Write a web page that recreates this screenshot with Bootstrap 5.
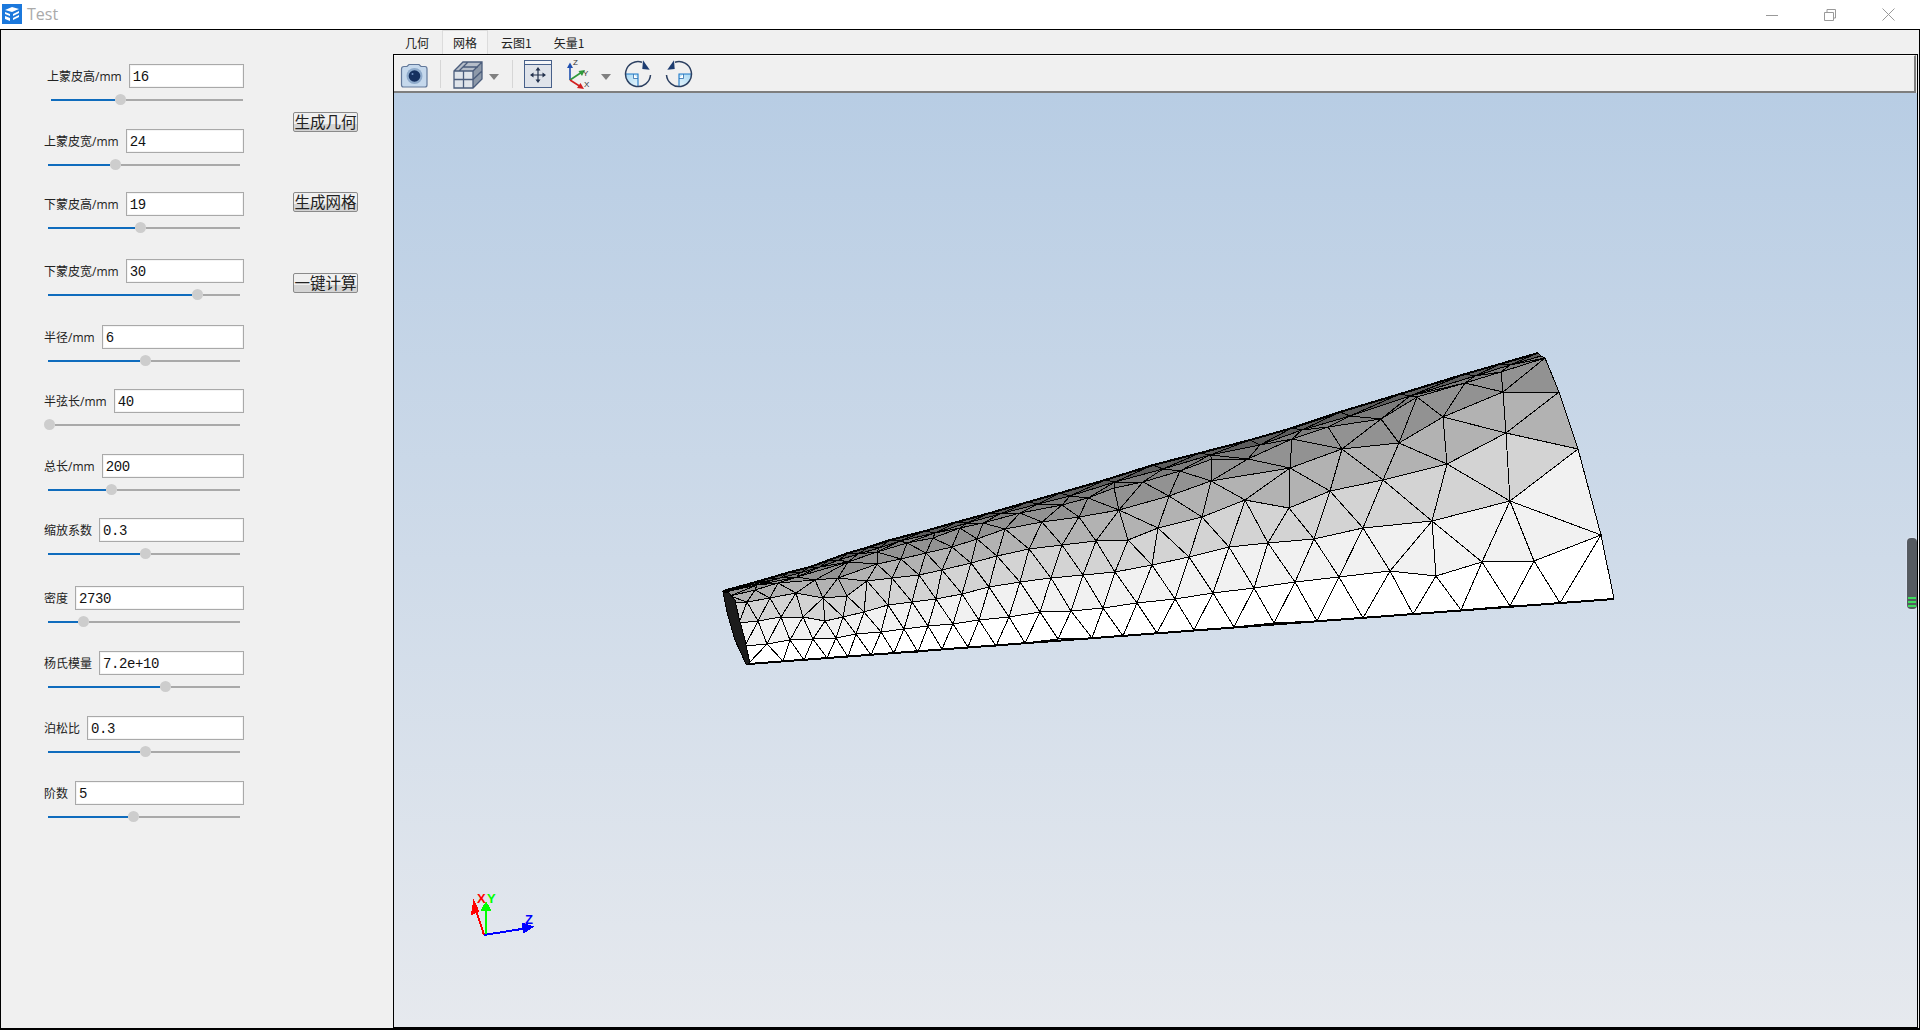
<!DOCTYPE html>
<html lang="zh">
<head>
  <meta charset="UTF-8">
  <title>Test</title>
  <meta name="viewport" content="width=device-width, initial-scale=1">
  <link href="https://cdn.jsdelivr.net/npm/bootstrap@5.3.3/dist/css/bootstrap.min.css" rel="stylesheet">
  <style>
    html, body { height: 1031px; overflow: hidden; background: #fff; }
    body { font-family: "Open Sans", "Noto Sans CJK SC", sans-serif; font-size: 12px; color: #222; }

    .title-bar { height: 29px; background: #fff; }
    .app-icon { margin: 4px 5px 0 2px; }
    .title-text { font-size: 16px; color: #aaa; line-height: 29px; }
    .win-group { margin-right: 3px; }
    .win-btn { width: 58px; height: 29px; }

    .main-area { height: 1001px; border: 1px solid #000; border-width: 1px 1px 2px 1px; background: #f0f0f0; }
    .side-panel { width: 392px; flex: none; }
    .param-col { width: 200px; margin-left: 43px; padding-top: 34px; }
    .param-block { margin-bottom: 24px; }
    .param-block:first-child { margin-left: 3px; }
    .param-block:nth-child(2) { margin-bottom: 22px; }
    .param-block:nth-child(3) { margin-bottom: 26px; }
    .param-block:nth-child(4) { margin-bottom: 25px; }
    .param-block:nth-child(5) { margin-bottom: 23px; }
    .param-block:nth-child(7) { margin-bottom: 23px; }
    .param-block:nth-child(8) { margin-bottom: 27px; }
    .param-head { column-gap: 7px; height: 24px; }
    .param-label { white-space: nowrap; line-height: 24px; padding-top: 1px; }
    .param-input { flex: 1; min-width: 0; height: 24px; border: 1px solid #a9a9a9; box-shadow: inset 0 0 0 1px #f4f4f4; background: #fff; padding: 2px 3px 0; font-family: "Liberation Mono", monospace; font-size: 14px; letter-spacing: -0.4px; color: #111; outline: 0; }

    .range-line { width: 192px; height: 11px; margin: 6px 0 0 4px; }
    .range-fill { height: 2px; background: #0f6cbd; flex: none; }
    .range-knob { width: 11px; height: 11px; border-radius: 50%; background: #cdcdcd; flex: none; }
    .knob-start { margin-left: -4px; }
    .range-rest { height: 2px; background: #a9a9a9; flex: 1; }

    .action-col { margin-left: 49px; padding-top: 82px; row-gap: 60px; }
    .calc-btn { width: 65px; height: 20px; padding: 0 0 2px; border: 1px solid #8a8a8a; border-radius: 2px; font-family: "Noto Sans CJK SC", sans-serif; font-size: 15.5px; line-height: 16px; color: #222; background: linear-gradient(#f0f0f0 60%, #d4d4d4 60%); white-space: nowrap; }
    .calc-btn:last-child { margin-top: 1px; }

    .work-col { flex: 1; min-width: 0; }
    .tab-strip { height: 24px; font-family: "Noto Sans CJK SC", sans-serif; }
    .tab-strip .nav-link { height: 24px; padding: 6px 11px 0; line-height: 14px; font-size: 12px; color: #222; }
    .tab-strip .tab-one { padding: 6px 13px 0 12px; }
    .tab-strip .tab-on { padding: 5px 10px 0; background: #f4f4f4; border: 1px solid #dcdcdc; border-width: 1px 1px 0 1px; }
    .tab-strip .tab-next { margin-left: 2px; }
    .tab-frame { height: 974px; margin-right: 1px; border: 1px solid #000; border-width: 1px 1px 1px 1px; }

    .tool-row { height: 38px; background: #f0f0f0; border-top: 1px solid #fafafa; border-bottom: 2px solid #7e7e7e; border-right: 2px solid #7e7e7e; margin-right: 1px; padding: 4px 0 0 6px; }
    .tool-sep { width: 1px; height: 28px; background: #d6d6d6; }
    .tool-row svg { flex: none; display: block; }
    .sep-first { margin-left: 12px; }
    .cube-icon { margin-left: 12px; }
    .sep-second { margin-left: 12px; }
    .fit-icon { margin-left: 11px; }
    .axes-icon { margin-left: 16px; margin-top: -2px; overflow: visible; }
    .drop-arrow { margin-top: 8px; }
    .drop-axes { margin-left: 1px; }
    .rot-left { margin-left: 12px; }
    .rot-right { margin-left: 13px; }

    .view-pane { height: 934px; background: linear-gradient(#b8cde4, #e6e9ee); overflow: hidden; }
    .mesh-canvas { position: absolute; left: 0; top: 0; shape-rendering: crispEdges; }
    .float-bar { position: absolute; left: 1513px; top: 445px; width: 10px; height: 71px; border-radius: 4px; background: #555a60; box-shadow: 0 0 2px #eef; overflow: hidden; }
    .float-bar i { display: block; height: 2px; margin: 2px 1px 0; background: #3ddc5c; }
    .float-bar b { display: block; height: 57px; }
    .axis-text { font-family: "Liberation Sans", sans-serif; font-weight: 700; font-size: 13px; }
    .icon-text { font-family: "Liberation Sans", sans-serif; font-size: 8px; fill: #333; }
  </style>
</head>
<body>

  <div class="title-bar d-flex align-items-start">
    <svg class="app-icon" width="20" height="20" viewBox="0 0 20 20">
      <rect width="20" height="20" fill="#1b78dc"/>
      <path d="M3 6 L10 3 L17 5 L10 8 Z M3 8 L8 10 L8 12 L3 10 Z M3 12 L8 14 L8 17 L3 15 Z" fill="#fff"/>
      <path d="M11 10 L17 7 L17 9 L11 12 Z M11 14 L17 11 L17 13 L11 16 Z" fill="#fff"/>
    </svg>
    <span class="title-text">Test</span>
    <div class="win-group ms-auto d-flex">
      <div class="win-btn d-flex align-items-center justify-content-center">
        <svg width="12" height="12"><path d="M0 6.5 H12" stroke="#999"/></svg>
      </div>
      <div class="win-btn d-flex align-items-center justify-content-center">
        <svg width="12" height="12"><path d="M0.5 3.5 H9.5 V11.5 H0.5 Z M3 3 V0.5 H11.5 V9 H10" fill="none" stroke="#999"/></svg>
      </div>
      <div class="win-btn d-flex align-items-center justify-content-center">
        <svg width="13" height="13"><path d="M0.5 0.5 L12.5 12.5 M12.5 0.5 L0.5 12.5" stroke="#999"/></svg>
      </div>
    </div>
  </div>

  <div class="main-area d-flex">
    <div class="side-panel d-flex">
      <div class="param-col">
        <div class="param-block">
          <div class="param-head d-flex"><label class="param-label">上蒙皮高/mm</label><input class="param-input" value="16"></div>
          <div class="range-line d-flex align-items-center"><div class="range-fill" style="width:64px"></div><div class="range-knob"></div><div class="range-rest"></div></div>
        </div>
        <div class="param-block">
          <div class="param-head d-flex"><label class="param-label">上蒙皮宽/mm</label><input class="param-input" value="24"></div>
          <div class="range-line d-flex align-items-center"><div class="range-fill" style="width:62px"></div><div class="range-knob"></div><div class="range-rest"></div></div>
        </div>
        <div class="param-block">
          <div class="param-head d-flex"><label class="param-label">下蒙皮高/mm</label><input class="param-input" value="19"></div>
          <div class="range-line d-flex align-items-center"><div class="range-fill" style="width:87px"></div><div class="range-knob"></div><div class="range-rest"></div></div>
        </div>
        <div class="param-block">
          <div class="param-head d-flex"><label class="param-label">下蒙皮宽/mm</label><input class="param-input" value="30"></div>
          <div class="range-line d-flex align-items-center"><div class="range-fill" style="width:144px"></div><div class="range-knob"></div><div class="range-rest"></div></div>
        </div>
        <div class="param-block">
          <div class="param-head d-flex"><label class="param-label">半径/mm</label><input class="param-input" value="6"></div>
          <div class="range-line d-flex align-items-center"><div class="range-fill" style="width:92px"></div><div class="range-knob"></div><div class="range-rest"></div></div>
        </div>
        <div class="param-block">
          <div class="param-head d-flex"><label class="param-label">半弦长/mm</label><input class="param-input" value="40"></div>
          <div class="range-line d-flex align-items-center"><div class="range-knob knob-start"></div><div class="range-rest"></div></div>
        </div>
        <div class="param-block">
          <div class="param-head d-flex"><label class="param-label">总长/mm</label><input class="param-input" value="200"></div>
          <div class="range-line d-flex align-items-center"><div class="range-fill" style="width:58px"></div><div class="range-knob"></div><div class="range-rest"></div></div>
        </div>
        <div class="param-block">
          <div class="param-head d-flex"><label class="param-label">缩放系数</label><input class="param-input" value="0.3"></div>
          <div class="range-line d-flex align-items-center"><div class="range-fill" style="width:92px"></div><div class="range-knob"></div><div class="range-rest"></div></div>
        </div>
        <div class="param-block">
          <div class="param-head d-flex"><label class="param-label">密度</label><input class="param-input" value="2730"></div>
          <div class="range-line d-flex align-items-center"><div class="range-fill" style="width:30px"></div><div class="range-knob"></div><div class="range-rest"></div></div>
        </div>
        <div class="param-block">
          <div class="param-head d-flex"><label class="param-label">杨氏模量</label><input class="param-input" value="7.2e+10"></div>
          <div class="range-line d-flex align-items-center"><div class="range-fill" style="width:112px"></div><div class="range-knob"></div><div class="range-rest"></div></div>
        </div>
        <div class="param-block">
          <div class="param-head d-flex"><label class="param-label">泊松比</label><input class="param-input" value="0.3"></div>
          <div class="range-line d-flex align-items-center"><div class="range-fill" style="width:92px"></div><div class="range-knob"></div><div class="range-rest"></div></div>
        </div>
        <div class="param-block">
          <div class="param-head d-flex"><label class="param-label">阶数</label><input class="param-input" value="5"></div>
          <div class="range-line d-flex align-items-center"><div class="range-fill" style="width:80px"></div><div class="range-knob"></div><div class="range-rest"></div></div>
        </div>
      </div>
      <div class="action-col d-flex flex-column align-items-start">
        <button class="btn calc-btn">生成几何</button>
        <button class="btn calc-btn">生成网格</button>
        <button class="btn calc-btn">一键计算</button>
      </div>
    </div>

    <div class="work-col">
      <ul class="nav tab-strip">
        <li class="nav-item"><a class="nav-link tab-one" href="#">几何</a></li>
        <li class="nav-item"><a class="nav-link tab-on" href="#">网格</a></li>
        <li class="nav-item tab-next"><a class="nav-link" href="#">云图1</a></li>
        <li class="nav-item"><a class="nav-link" href="#">矢量1</a></li>
      </ul>
      <div class="tab-frame">
        <div class="tool-row d-flex align-items-start">
          <!-- camera -->
          <svg width="28" height="28" viewBox="0 0 28 28">
            <path d="M1.5 9 Q1.5 6.5 4 6.5 H7 L9 4.5 H19 L21 6.5 H25 Q27 6.5 27 9 V25 Q27 27 25 27 H3.5 Q1.5 27 1.5 25 Z" fill="#c5d8ec" stroke="#62789a" stroke-width="1.2"/>
            <circle cx="14.5" cy="16" r="8" fill="#8eaacb"/>
            <circle cx="14.5" cy="16" r="5.8" fill="#16305f"/>
            <circle cx="12.5" cy="14" r="1" fill="#6f8fbf"/>
          </svg>
          <div class="tool-sep sep-first"></div>
          <!-- mesh cube -->
          <svg class="cube-icon" width="30" height="30" viewBox="0 0 30 30">
            <path d="M1 11 L10 2 H29 V19 L20 28 H1 Z" fill="#dfe4ea"/>
            <path d="M1 11 L10 2 H29 L20 11 Z" fill="#b6bec9"/>
            <path d="M20 11 L29 2 V19 L20 28 Z" fill="#8d99a9"/>
            <path d="M1 11 L10 2 H29 V19 L20 28 H1 Z M1 11 H20 L29 2 M20 11 V28 M1 19.5 H20 L29 11 M10.5 11 V28 M6 11 L15 2 M10 7 H25" fill="none" stroke="#4b5d7c" stroke-width="1.3"/>
          </svg>
          <svg class="drop-arrow" width="17" height="14" viewBox="0 0 17 14"><path d="M6 6 H16 L11 12 Z" fill="#808080"/></svg>
          <div class="tool-sep sep-second"></div>
          <!-- fit view -->
          <svg class="fit-icon" width="28" height="28" viewBox="0 0 28 28">
            <rect x="0.5" y="0.5" width="27" height="27" fill="#dfe3ea" stroke="#47608a"/>
            <rect x="0.5" y="0.5" width="27" height="4" fill="#f5f6f8" stroke="#47608a"/>
            <path d="M14 9 V21 M8 15 H20" stroke="#22314d" stroke-width="1.2"/>
            <path d="M14 7 L11.5 10.5 H16.5 Z M14 23 L11.5 19.5 H16.5 Z M6 15 L9.5 12.5 V17.5 Z M22 15 L18.5 12.5 V17.5 Z" fill="#22314d"/>
          </svg>
          <!-- axes -->
          <svg class="axes-icon" width="26" height="32" viewBox="0 0 26 32">
            <path d="M2 22 V8" stroke="#1f4fb0" stroke-width="1.6"/>
            <path d="M2 22 L14 14" stroke="#2f9a3a" stroke-width="1.6"/>
            <path d="M2 22 L13 29" stroke="#d21f1f" stroke-width="1.6"/>
            <path d="M2 4.5 L-1 10 H5 Z" fill="#1f4fb0"/>
            <path d="M17 12 L10.5 13 L14 18 Z" fill="#2f9a3a"/>
            <path d="M16 31 L9 30 L12.5 25 Z" fill="#d21f1f"/>
            <text class="icon-text" x="5" y="7">Z</text>
            <text class="icon-text" x="15" y="18">Y</text>
            <text class="icon-text" x="16" y="29">X</text>
          </svg>
          <svg class="drop-arrow drop-axes" width="17" height="14" viewBox="0 0 17 14"><path d="M6 6 H16 L11 12 Z" fill="#808080"/></svg>
          <!-- rotate cw -->
          <svg class="rot-left" width="28" height="28" viewBox="0 0 28 28">
            <defs><linearGradient id="rotFill" x1="0" y1="0" x2="1" y2="1"><stop offset="0" stop-color="#a6d8f4"/><stop offset="1" stop-color="#e6f4fb"/></linearGradient></defs>
            <path d="M14 14 H1.5 A12.5 12.5 0 0 0 14 26.5 Z" fill="url(#rotFill)"/>
            <path d="M9.5 14 V18.5 H14" fill="#fff" stroke="#2d6aa8" stroke-width="0.8"/>
            <path d="M1.5 14 H14 V26.5" fill="none" stroke="#1c78c8" stroke-width="1.1"/>
            <path d="M26.5 15 A12.5 12.5 0 1 1 18 2.2" fill="none" stroke="#2b3f60" stroke-width="1.5"/>
            <path d="M25.7 9.7 L19 0.3 L18.3 9 Z" fill="#1d3c70"/>
          </svg>
          <!-- rotate ccw -->
          <svg class="rot-right" width="28" height="28" viewBox="0 0 28 28">
            <g transform="translate(28 0) scale(-1 1)">
              <path d="M14 14 H1.5 A12.5 12.5 0 0 0 14 26.5 Z" fill="url(#rotFill)"/>
              <path d="M9.5 14 V18.5 H14" fill="#fff" stroke="#2d6aa8" stroke-width="0.8"/>
              <path d="M1.5 14 H14 V26.5" fill="none" stroke="#1c78c8" stroke-width="1.1"/>
              <path d="M26.5 15 A12.5 12.5 0 1 1 18 2.2" fill="none" stroke="#2b3f60" stroke-width="1.5"/>
              <path d="M25.7 9.7 L19 0.3 L18.3 9 Z" fill="#1d3c70"/>
            </g>
          </svg>
        </div>
        <div class="view-pane position-relative">
          <svg id="mesh" class="mesh-canvas" width="1523" height="934" viewBox="394 93 1523 934"></svg>
          <div class="float-bar"><b></b><i></i><i></i><i></i></div>
        </div>
      </div>
    </div>
  </div>

  <script>
    // strips of the wing, bottom to top (page coordinates)
    const rows = [
      [[748,664],[783,661],[804,660],[827,658],[848,657],[871,655],[894,653],[918,652],[942,649],[968,647],[996,646],[1025,643],[1058,639],[1092,638],[1123,636],[1157,633],[1194,630],[1234,627],[1274,623],[1317,621],[1363,618],[1413,614],[1461,610],[1510,606],[1560,603],[1614,599]],
      [[745,646],[767,644],[790,640],[813,639],[836,638],[856,634],[881,632],[904,629],[928,626],[953,624],[979,620],[1009,617],[1040,612],[1071,611],[1103,608],[1137,603],[1175,599],[1213,593],[1254,588],[1295,582],[1339,577],[1390,571],[1436,576],[1482,562],[1534,561],[1601,535]],
      [[739,623],[758,621],[781,617],[803,617],[825,621],[843,617],[864,612],[888,605],[912,602],[936,599],[962,594],[989,587],[1020,582],[1051,578],[1083,575],[1115,572],[1152,565],[1189,557],[1229,547],[1268,543],[1314,539],[1363,528],[1432,521],[1510,501],[1578,449]],
      [[735,603],[747,602],[770,598],[796,593],[823,598],[847,596],[867,581],[892,578],[919,575],[942,570],[971,563],[997,556],[1029,549],[1062,545],[1096,541],[1128,540],[1158,528],[1202,517],[1245,500],[1289,508],[1330,491],[1383,480],[1447,464],[1506,433],[1578,449]],
      [[730,596],[755,590],[778,583],[815,580],[838,578],[877,564],[901,559],[926,553],[952,547],[977,539],[1005,529],[1042,522],[1079,517],[1119,510],[1169,496],[1211,481],[1290,468],[1342,449],[1399,443],[1443,417],[1503,392],[1559,392]],
      [[725,592],[757,585],[797,577],[848,562],[877,552],[907,543],[933,538],[960,528],[983,523],[1020,513],[1062,505],[1088,498],[1114,488],[1143,482],[1180,471],[1212,459],[1248,459],[1292,439],[1328,427],[1381,419],[1417,397],[1465,383],[1501,372],[1545,358]]
    ];
    const edge = [[723,591],[745,585],[770,578],[790,572],[810,567],[829,560],[848,553],[869,547],[890,540],[925,531],[957,522],[990,513],[1028,502],[1060,493],[1105,480],[1153,465],[1200,453],[1250,440],[1292,428],[1340,412],[1400,394],[1465,374],[1500,364],[1538,353]];
    const greys = ['#ffffff', '#f1f1f1', '#d3d3d3', '#b2b2b2', '#929292', '#7c7c7c', '#5c5c5c'];
    const dist = (a, b) => Math.hypot(a[0] - b[0], a[1] - b[1]);

    // thin row of small triangles just under the top edge
    const yOn = (line, x) => {
      for (let k = 0; k < line.length - 1; k++) {
        if (x >= line[k][0] && x <= line[k + 1][0]) {
          return line[k][1] + (line[k + 1][1] - line[k][1]) * (x - line[k][0]) / (line[k + 1][0] - line[k][0]);
        }
      }
      return line[line.length - 1][1];
    };
    const under = edge.slice(1, -1).map(p => {
      const x = p[0] + 10;
      return [x, Math.round((yOn(edge, x) + yOn(rows[5], x)) / 2)];
    });
    rows.push([[724,592], ...under, [1541,356]]);
    rows.push(edge);

    let out = '';
    rows.slice(0, -1).forEach((low, r) => {
      const up = rows[r + 1];
      let i = 0, j = 0;
      while (i < low.length - 1 || j < up.length - 1) {
        const stepLow = j === up.length - 1 || (i < low.length - 1 && dist(low[i + 1], up[j]) <= dist(low[i], up[j + 1]));
        const tri = stepLow ? [low[i], low[i + 1], up[j]] : [low[i], up[j + 1], up[j]];
        out += `<polygon points="${tri.join(' ')}" fill="${greys[r]}" stroke="#000" stroke-width="1"/>`;
        if (stepLow) i++; else j++;
      }
    });
    // dark nose, outline
    out += '<path d="M723 592 L727 612 L735 640 L746 664 L750 664 L745 640 L739 618 L735 600 L729 593 Z" fill="#1c1c1c" stroke="#000"/>';
    out += '<path d="M748 664 L1614 599" stroke="#000" stroke-width="2"/>';
    out += `<polyline points="${edge.map(p => p.join(',')).join(' ')}" fill="none" stroke="#000" stroke-width="2"/>`;
    // axis triad
    out += '<path d="M484 935 L475 907" stroke="#f00" stroke-width="2"/><path d="M474 902 L472 914 L478 911 Z" fill="#f00" stroke="#f00" stroke-width="2"/>';
    out += '<path d="M486 935 V908" stroke="#0f0" stroke-width="1.5"/><path d="M486 903 L482 910 H490 Z" fill="#0f0" stroke="#0f0" stroke-width="2"/>';
    out += '<path d="M484 935 L528 928" stroke="#00f" stroke-width="2"/><path d="M532 927 L523 924 L524 932 Z" fill="#00f" stroke="#00f" stroke-width="2"/>';
    out += '<text class="axis-text" x="477" y="903" fill="#f00">X</text><text class="axis-text" x="487" y="903" fill="#0f0">Y</text><text class="axis-text" x="525" y="924" fill="#00f">Z</text>';
    document.getElementById('mesh').innerHTML = out;
  </script>

  <script src="https://cdn.jsdelivr.net/npm/bootstrap@5.3.3/dist/js/bootstrap.bundle.min.js"></script>
</body>
</html>
